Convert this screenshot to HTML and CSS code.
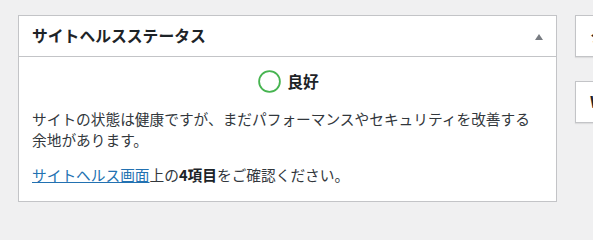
FILE: index.html
```html
<!DOCTYPE html>
<html lang="ja">
<head>
<meta charset="utf-8">
<title>サイトヘルスステータス</title>
<link rel="stylesheet" href="styles.css">
</head>
<body>
<div class="dashboard">
  <div class="postbox main-box">
    <div class="postbox-header">
      <h2 class="hndle">サイトヘルスステータス</h2>
      <span class="toggle-arrow"></span>
    </div>
    <div class="inside">
      <div class="status-title">
        <svg class="status-circle" width="23" height="23" viewBox="0 0 23 23"><circle cx="11.5" cy="11.5" r="10.4" fill="none" stroke="#46b450" stroke-width="1.8"/></svg>
        <span class="status-label">良好</span>
      </div>
      <p class="status-desc">サイトの状態は健康ですが、まだパフォーマンスやセキュリティを改善する余地があります。</p>
      <p class="status-link"><a href="#">サイトヘルス画面</a>上の<strong>4項目</strong>をご確認ください。</p>
    </div>
  </div>
  <div class="side-column">
    <div class="postbox side-box">
      <div class="postbox-header">
        <h2 class="hndle">クイックドラフト</h2>
      </div>
    </div>
    <div class="postbox side-box">
      <div class="postbox-header">
        <h2 class="hndle">WordPress イベントとニュース</h2>
      </div>
    </div>
  </div>
</div>
</body>
</html>
```

FILE: styles.css
```css
html, body {
  margin: 0;
  padding: 0;
  overflow: hidden;
  background: #f0f0f1;
}

body {
  font-family: "Noto Sans CJK JP", "Noto Sans", sans-serif;
  color: #32373c;
  width: 593px;
  height: 218px;
}

.dashboard {
  display: flex;
  align-items: flex-start;
  gap: 18px;
  padding: 15px 0 0 18px;
  width: 593px;
  height: 218px;
  box-sizing: border-box;
  overflow: hidden;
}

.postbox {
  background: #fff;
  border: 1px solid #c3c4c7;
  box-sizing: border-box;
}

.main-box {
  width: 539px;
  height: 187px;
  flex-shrink: 0;
}

.postbox-header {
  height: 40px;
  border-bottom: 1px solid #c3c4c7;
  display: flex;
  align-items: center;
  justify-content: space-between;
  padding: 0 13px 0 13px;
}

.hndle {
  margin: 0;
  font-size: 15.8px;
  font-weight: 700;
  color: #1d2327;
  line-height: 1;
  white-space: nowrap;
}

.toggle-arrow {
  width: 0;
  height: 0;
  border-left: 4.5px solid transparent;
  border-right: 4.5px solid transparent;
  border-bottom: 6px solid #787c82;
  margin-top: 1px;
}

.inside {
  padding: 0 12px 0 13px;
}

.status-title {
  display: flex;
  align-items: center;
  justify-content: center;
  gap: 6px;
  margin-top: 13px;
  height: 23px;
  padding-left: 1px;
}

.status-circle {
  display: block;
}

.status-label {
  font-size: 15.8px;
  font-weight: 700;
  color: #1d2327;
  line-height: 1;
}

.status-desc,
.status-link {
  font-size: 14.7px;
  line-height: 21px;
  margin: 0;
  max-width: 505px;
}

.status-desc {
  margin-top: 15px;
}

.status-link {
  margin-top: 14px;
}

.status-link a {
  color: #2271b1;
  text-decoration: underline;
}

.status-link strong {
  font-weight: 700;
  color: #1d2327;
}

.side-column {
  display: flex;
  flex-direction: column;
  gap: 24px;
  width: 500px;
  flex-shrink: 0;
}

.side-box {
  height: 42px;
  box-shadow: 0 1px 1px rgba(0, 0, 0, 0.08);
}

.side-box .postbox-header {
  border-bottom: none;
  padding-left: 14px;
}
```
